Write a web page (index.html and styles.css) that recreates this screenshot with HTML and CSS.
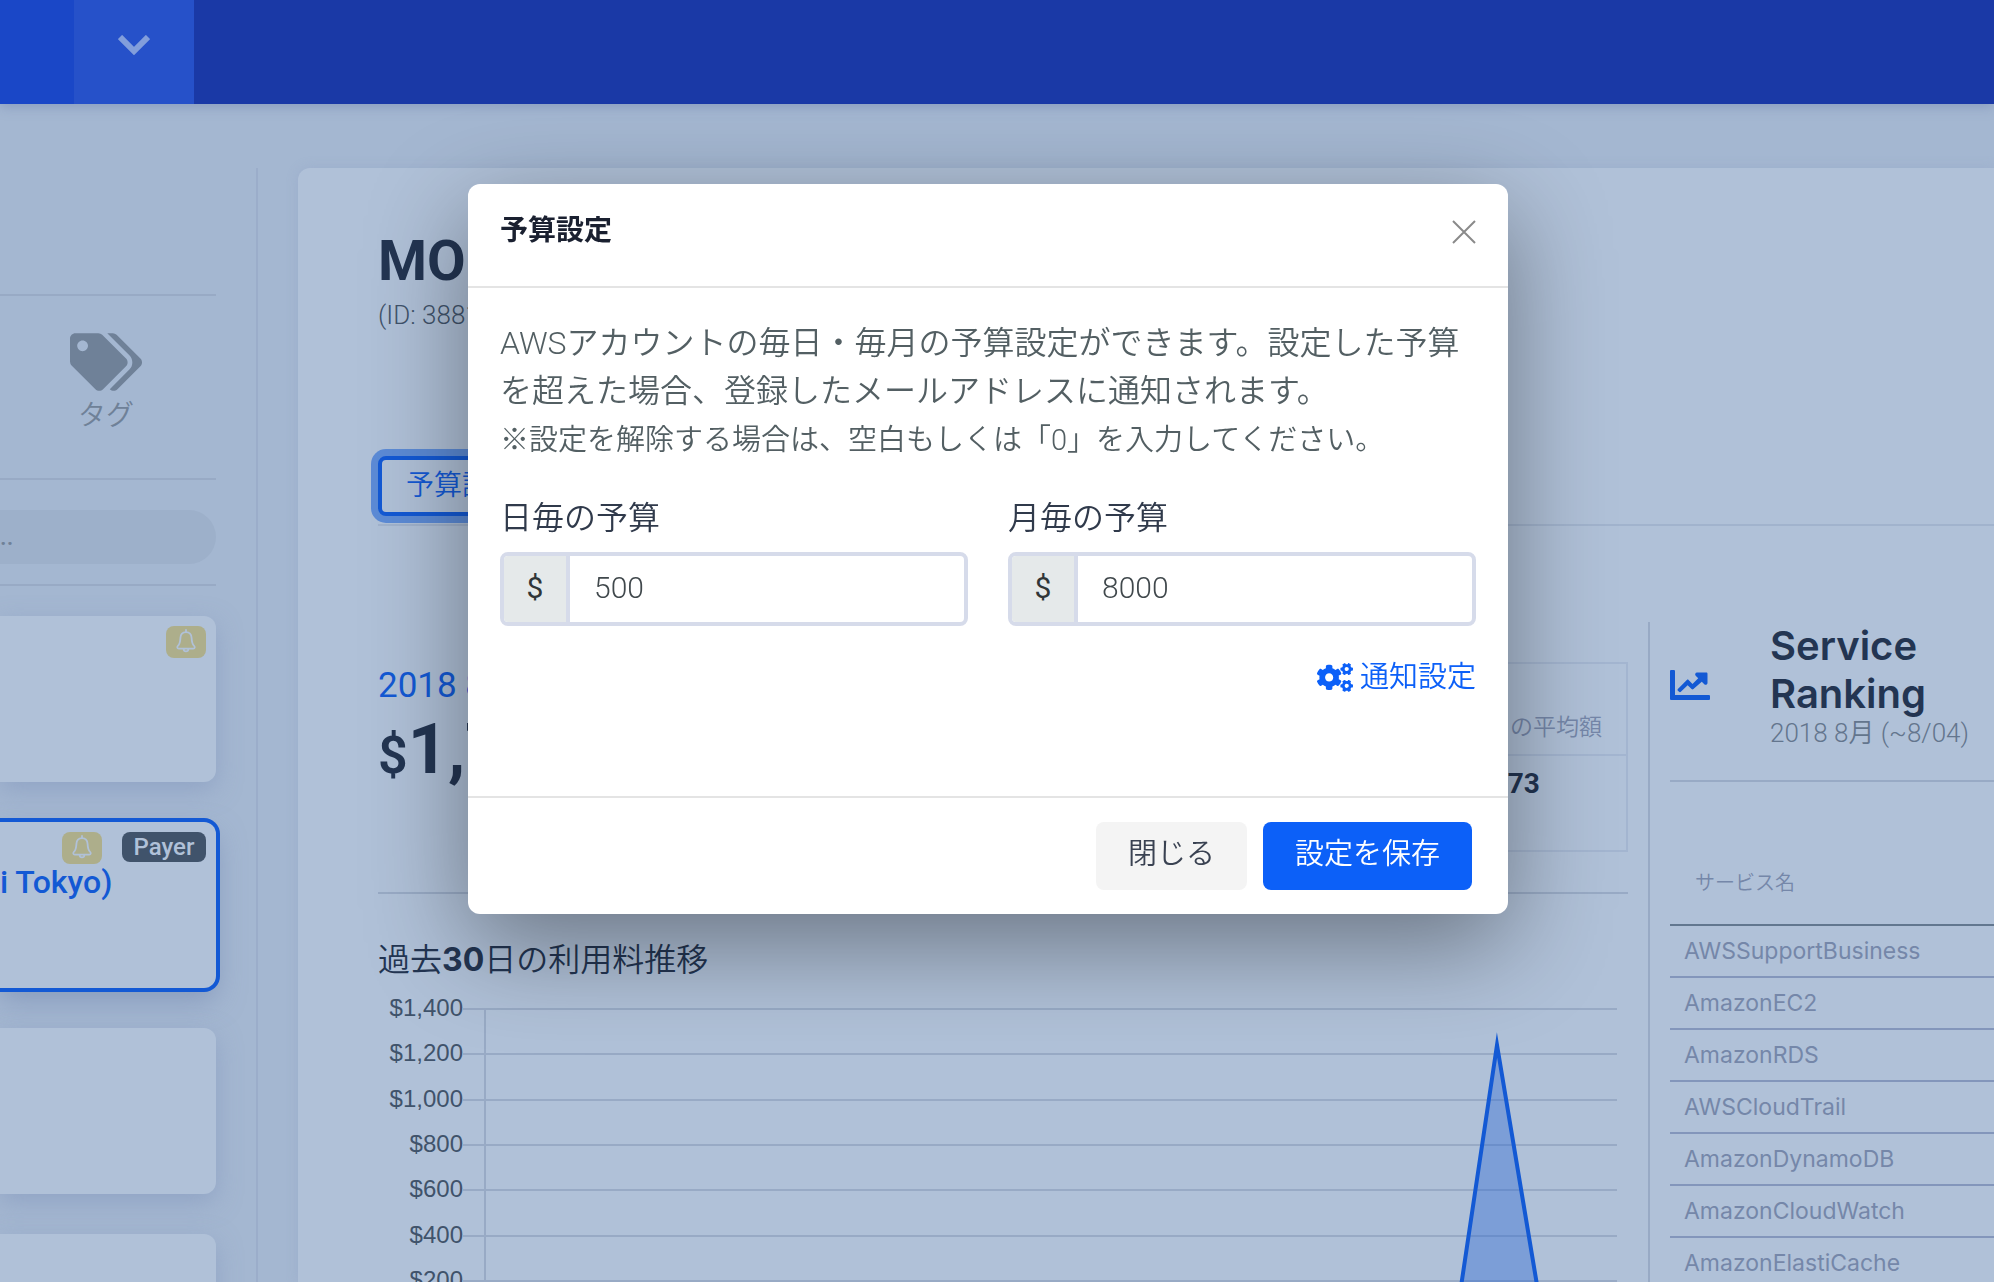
FILE: index.html
```html
<!DOCTYPE html>
<html lang="ja">
<head>
<meta charset="utf-8">
<meta name="viewport" content="width=device-width, initial-scale=1">
<title>予算設定</title>
<link rel="stylesheet" href="styles.css">
</head>
<body>
<svg class="sprite" aria-hidden="true">
  <symbol id="bell" viewBox="0 0 20 24">
    <path d="M10 3.2C6.6 3.2 4.6 5.6 4.4 9c-.2 4-.7 6.200-2.300 7.600-1.400 1.300-1 3 .7 3h14.400c1.700 0 2.100-1.700.7-3C16.300 15.200 15.800 13 15.600 9 15.400 5.600 13.400 3.200 10 3.200zM10 3V1M7.600 20c.2 3.200 4.600 3.200 4.800 0" fill="none" stroke="currentColor" stroke-width="1.800" stroke-linecap="round"/>
  </symbol>
</svg>

<header class="topbar">
  <div class="brand"></div>
  <button class="toggle" type="button" aria-label="メニュー">
    <svg width="32" height="20" viewBox="0 0 32 20"><path d="M2 2l14 14L30 2" fill="none" stroke="currentColor" stroke-width="6"/></svg>
  </button>
</header>

<div class="page">
  <aside class="sidebar">
    <div class="side-tabs">
      <a class="tag" href="#">
        <svg width="72" height="58" viewBox="0 0 640 512"><path fill="currentColor" d="M497.941 225.941L286.059 14.059A48 48 0 0 0 252.118 0H48C21.490 0 0 21.490 0 48v204.118a48 48 0 0 0 14.059 33.941l211.882 211.882c18.744 18.745 49.136 18.746 67.882 0l204.118-204.118c18.745-18.745 18.745-49.137 0-67.882zM112 160c-26.510 0-48-21.490-48-48s21.490-48 48-48 48 21.490 48 48-21.490 48-48 48zm513.941 133.823L421.823 497.941c-18.745 18.745-49.137 18.745-67.882 0l-.36-.36L527.640 323.522c16.999-16.999 26.360-39.600 26.360-63.640s-9.362-46.641-26.360-63.640L331.397 0h48.721a48 48 0 0 1 33.941 14.059l211.882 211.882c18.745 18.745 18.745 49.137 0 67.882z"/></svg>
        <span>タグ</span>
      </a>
    </div>
    <div class="search"><input type="text" placeholder=".." aria-label="検索"></div>
    <div class="accounts">
      <div class="account">
        <div class="badges"><span class="badge alert"><svg width="20" height="24"><use href="#bell"/></svg></span></div>
      </div>
      <div class="account selected">
        <div class="badges"><span class="badge alert"><svg width="20" height="24"><use href="#bell"/></svg></span><span class="badge payer">Payer</span></div>
        <div class="account-name">i Tokyo)</div>
      </div>
      <div class="account"></div>
      <div class="account"></div>
    </div>
  </aside>

  <main class="panel">
    <h1>MOBI</h1>
    <p class="account-id">(ID: 3881)</p>
    <div class="toolbar"><button class="outline" type="button">予算設定</button></div>
    <div class="columns">
      <section class="usage">
        <div class="summary">
          <div>
            <div class="month">2018 8月</div>
            <div class="amount"><small>$</small>1,739</div>
          </div>
          <table class="average">
            <tr><th>過去3ヶ月の平均額</th></tr>
            <tr><td>$9.73</td></tr>
          </table>
        </div>
        <h2>過去<b>30</b>日の利用料推移</h2>
        <svg class="chart" viewBox="0 0 1250 360" role="img" aria-label="過去30日の利用料推移">
          <g class="grid">
            <path d="M85 25H1239M85 70H1239M85 116H1239M85 161H1239M85 206H1239M85 252H1239M85 297H1239M85 343H1239M107 24V343"/>
          </g>
          <g class="ticks">
            <text x="85" y="32">$1,400</text>
            <text x="85" y="77">$1,200</text>
            <text x="85" y="123">$1,000</text>
            <text x="85" y="168">$800</text>
            <text x="85" y="213">$600</text>
            <text x="85" y="259">$400</text>
            <text x="85" y="304">$200</text>
          </g>
          <path class="area" d="M107 343H1077L1119 61L1166 343H1239"/>
        </svg>
      </section>
      <aside class="ranking">
        <div class="ranking-head">
          <svg width="40" height="30" viewBox="0 64 512 384"><path fill="currentColor" d="M496 384H64V80c0-8.840-7.160-16-16-16H16C7.160 64 0 71.160 0 80v352c0 9 7 16 16 16h480c8.840 0 16-7.160 16-16v-32c0-8.840-7.160-16-16-16zM464 96H345.940c-21.380 0-32.090 25.850-16.970 40.970l32.400 32.400L288 242.750l-50-50c-8-8-16-8-23 0L100.690 306c-6.250 6.250-6.250 16 0 22l15 15c7 7 17 7 23 0L226 258l50 50c8 8 16 8 24 0l106.600-93.400 32.400 32.400c15.120 15.120 40.970 4.410 40.970-16.970V112c.01-8.840-7.150-16-15.990-16z"/></svg>
          <div>
            <h3>Service Ranking</h3>
            <p>2018 8月 (~8/04)</p>
          </div>
        </div>
        <table class="services">
          <thead><tr><th>サービス名</th></tr></thead>
          <tbody>
            <tr><td>AWSSupportBusiness</td></tr>
            <tr><td>AmazonEC2</td></tr>
            <tr><td>AmazonRDS</td></tr>
            <tr><td>AWSCloudTrail</td></tr>
            <tr><td>AmazonDynamoDB</td></tr>
            <tr><td>AmazonCloudWatch</td></tr>
            <tr><td>AmazonElastiCache</td></tr>
          </tbody>
        </table>
      </aside>
    </div>
  </main>
</div>

<div class="overlay">
  <form class="modal" role="dialog" aria-labelledby="modal-title">
    <div class="modal-head">
      <h4 id="modal-title">予算設定</h4>
      <button class="close" type="button" aria-label="閉じる">
        <svg width="24" height="24" viewBox="0 0 24 24"><path d="M1 1l22 22M23 1L1 23" stroke="currentColor" stroke-width="2"/></svg>
      </button>
    </div>
    <div class="modal-body">
      <p class="lead">AWSアカウントの毎日・毎月の予算設定ができます。設定した予算を超えた場合、登録したメールアドレスに通知されます。</p>
      <p class="note">※設定を解除する場合は、空白もしくは「0」を入力してください。</p>
      <div class="fields">
        <div class="field">
          <label for="daily">日毎の予算</label>
          <div class="group"><span>$</span><input id="daily" type="text" value="500"></div>
        </div>
        <div class="field">
          <label for="monthly">月毎の予算</label>
          <div class="group"><span>$</span><input id="monthly" type="text" value="8000"></div>
        </div>
      </div>
      <a class="notify" href="#">
        <svg width="36" height="29" viewBox="0 0 640 512"><path fill="currentColor" d="M512.100 191l-8.200 14.300c-3 5.300-9.400 7.500-15.100 5.400-11.800-4.400-22.600-10.700-32.100-18.600-4.600-3.800-5.800-10.500-2.800-15.700l8.200-14.300c-6.900-8-12.300-17.300-15.900-27.400h-16.500c-6 0-11.200-4.300-12.200-10.300-2-12-2.100-24.600 0-37.100 1-6 6.200-10.400 12.200-10.400h16.500c3.600-10.100 9-19.400 15.900-27.400l-8.200-14.300c-3-5.200-1.900-11.900 2.800-15.700 9.500-7.900 20.400-14.200 32.100-18.600 5.700-2.100 12.100.1 15.100 5.400l8.200 14.300c10.500-1.900 21.200-1.900 31.700 0L552 6.300c3-5.300 9.400-7.500 15.100-5.400 11.800 4.400 22.600 10.700 32.100 18.600 4.600 3.800 5.800 10.500 2.800 15.700l-8.200 14.300c6.900 8 12.300 17.300 15.900 27.400h16.500c6 0 11.200 4.300 12.200 10.300 2 12 2.100 24.600 0 37.100-1 6-6.200 10.400-12.200 10.400h-16.500c-3.600 10.100-9 19.400-15.900 27.400l8.200 14.300c3 5.200 1.900 11.900-2.800 15.700-9.500 7.900-20.400 14.200-32.100 18.600-5.700 2.100-12.100-.1-15.100-5.400l-8.200-14.300c-10.400 1.900-21.200 1.900-31.700 0zm-10.500-58.800c38.500 29.600 82.400-14.300 52.800-52.800-38.500-29.700-82.400 14.300-52.800 52.800zM386.300 286.100l33.700 16.800c10.100 5.800 14.500 18.100 10.500 29.100-8.900 24.200-26.400 46.400-42.600 65.800-7.400 8.900-20.200 11.100-30.300 5.300l-29.100-16.800c-16 13.700-34.600 24.600-54.900 31.700v33.600c0 11.600-8.300 21.600-19.700 23.600-24.600 4.200-50.400 4.400-75.900 0-11.500-2-20-11.900-20-23.600V418c-20.300-7.200-38.900-18-54.900-31.700L74 403c-10 5.800-22.900 3.600-30.300-5.300-16.200-19.400-33.300-41.600-42.200-65.700-4-10.900.4-23.200 10.500-29.100l33.300-16.800c-3.900-20.900-3.900-42.400 0-63.400L12 205.800c-10.100-5.800-14.600-18.100-10.500-29 8.900-24.200 26-46.400 42.200-65.800 7.400-8.900 20.200-11.100 30.300-5.300l29.100 16.800c16-13.700 34.600-24.600 54.900-31.700V57.100c0-11.500 8.200-21.500 19.600-23.500 24.600-4.200 50.500-4.400 76-.1 11.500 2 20 11.900 20 23.600v33.600c20.300 7.200 38.900 18 54.900 31.700l29.100-16.800c10-5.800 22.900-3.600 30.300 5.300 16.200 19.400 33.200 41.600 42.100 65.800 4 10.900.1 23.200-10 29.100l-33.700 16.800c3.900 21 3.900 42.500 0 63.500zm-117.600 21.100c59.200-77-28.700-164.900-105.700-105.700-59.200 77 28.700 164.900 105.700 105.700zm243.400 182.700l-8.200 14.300c-3 5.300-9.400 7.500-15.100 5.400-11.800-4.400-22.600-10.700-32.100-18.600-4.600-3.800-5.800-10.500-2.800-15.700l8.200-14.300c-6.900-8-12.300-17.300-15.900-27.400h-16.500c-6 0-11.200-4.300-12.200-10.300-2-12-2.100-24.600 0-37.100 1-6 6.200-10.400 12.200-10.400h16.500c3.600-10.100 9-19.400 15.900-27.400l-8.200-14.300c-3-5.200-1.900-11.900 2.800-15.700 9.500-7.900 20.400-14.200 32.100-18.600 5.700-2.100 12.100.1 15.100 5.400l8.200 14.300c10.500-1.900 21.200-1.900 31.700 0l8.200-14.300c3-5.300 9.400-7.500 15.100-5.400 11.800 4.400 22.600 10.700 32.100 18.600 4.600 3.800 5.800 10.500 2.800 15.700l-8.200 14.300c6.900 8 12.300 17.300 15.900 27.400h16.500c6 0 11.200 4.300 12.200 10.300 2 12 2.100 24.600 0 37.100-1 6-6.200 10.400-12.200 10.400h-16.500c-3.600 10.100-9 19.400-15.900 27.400l8.200 14.300c3 5.200 1.900 11.900-2.800 15.700-9.500 7.900-20.400 14.200-32.100 18.600-5.700 2.100-12.100-.1-15.100-5.400l-8.200-14.300c-10.400 1.900-21.200 1.900-31.700 0zM501.600 431c38.500 29.600 82.400-14.300 52.800-52.800-38.500-29.600-82.400 14.300-52.800 52.800z"/></svg>
        <span>通知設定</span>
      </a>
    </div>
    <div class="modal-foot">
      <button class="btn" type="button">閉じる</button>
      <button class="btn primary" type="submit">設定を保存</button>
    </div>
  </form>
</div>
</body>
</html>
```
FILE: styles.css
```css
* { box-sizing: border-box; }

:root {
  --bg: #a4b7d1;
  --surface: #b0c1d8;
  --rule: #98aac5;
  --ink: #233552;
  --muted: #7587a9;
  --blue: #1359d4;
  --bright: #0c60f8;
  --sans: Roboto, "Noto Sans CJK JP", sans-serif;
  --wide: Inter, "Noto Sans CJK JP", sans-serif;
}

body {
  margin: 0;
  height: 100vh;
  overflow: hidden;
  display: flex;
  flex-direction: column;
  background: var(--bg);
  color: var(--ink);
  font-family: var(--sans);
  font-weight: 350;
}

h1, h2, h3, h4, p { margin: 0; }
button, input { font: inherit; color: inherit; }
button { cursor: pointer; }
a { text-decoration: none; }
svg { display: block; }
.sprite { display: none; }

/* top bar */
.topbar {
  flex: none;
  display: flex;
  height: 104px;
  background: #1a39a6;
  box-shadow: 0 2px 12px rgba(90, 110, 160, .4);
}
.brand { width: 74px; background: #1a47c7; }
.toggle {
  width: 120px;
  padding: 0 0 14px;
  border: 0;
  display: grid;
  place-items: center;
  background: #2651c9;
  color: #829edb;
}

.page { display: flex; flex: 1; gap: 40px; padding-top: 64px; min-height: 0; }

/* sidebar */
.sidebar { flex: none; width: 258px; padding-right: 40px; border-right: 2px solid #9badca; }
.side-tabs {
  margin-top: 126px;
  height: 186px;
  border: solid var(--rule);
  border-width: 2px 0;
  padding: 37px 4px 0 0;
}
.tag { display: flex; flex-direction: column; align-items: center; gap: 9px; color: #6f8198; font-size: 28px; line-height: 32px; }
.search { padding: 30px 0 20px; border-bottom: 2px solid var(--rule); }
.search input {
  display: block;
  width: 100%;
  height: 54px;
  padding: 0;
  border: 0;
  border-radius: 0 27px 27px 0;
  background: #9db0ca;
  font-size: 24px;
  font-weight: 500;
}
.search input::placeholder { color: #6f8198; opacity: 1; }
.accounts { display: flex; flex-direction: column; gap: 40px; padding-top: 30px; }
.account {
  height: 166px;
  padding: 10px;
  border-radius: 0 12px 12px 0;
  background: var(--surface);
  box-shadow: 0 8px 24px rgba(125, 145, 185, .5);
}
.account.selected { box-shadow: 0 0 0 4px var(--blue), 0 12px 28px rgba(115, 135, 175, .6); padding-left: 0; }
.badges { display: flex; justify-content: flex-end; align-items: flex-start; gap: 20px; height: 32px; }
.badge { display: grid; place-items: center; border-radius: 8px; color: var(--surface); }
.badge.alert { width: 40px; height: 32px; padding-bottom: 2px; background: #adae8b; }
.badge.payer { width: 84px; height: 30px; background: #40536b; font: 500 24px/28px var(--sans); }
.account-name { color: var(--blue); font: 500 32px/36px var(--sans); }

/* main panel */
.panel {
  flex: 1;
  min-width: 0;
  padding: 60px 0 0 80px;
  border-radius: 12px 0 0 0;
  background: var(--surface);
  box-shadow: 0 0 12px rgba(140, 155, 195, .3);
}
h1 { font-size: 56px; line-height: 66px; font-weight: 700; }
.account-id { font-size: 26px; line-height: 42px; color: #40536b; }
.toolbar { margin-top: 120px; padding-bottom: 8px; border-bottom: 2px solid #a1b3cd; }
.outline {
  display: block;
  height: 60px;
  padding: 0 24px 6px;
  border: 4px solid var(--blue);
  border-radius: 8px;
  background: var(--surface);
  color: var(--blue);
  font-size: 28px;
  box-shadow: 0 0 0 7px #5c8bd6;
}
.columns { display: flex; gap: 20px; margin-top: 96px; }
.usage { flex: 1; min-width: 0; }
.summary {
  display: flex;
  justify-content: space-between;
  padding: 40px 0;
  border-bottom: 2px solid var(--rule);
}
.month { font-size: 35px; line-height: 48px; font-weight: 400; color: var(--blue); }
.amount { font-size: 70px; line-height: 78px; font-weight: 700; }
.amount small { font-size: 52px; font-weight: 600; }
.average { height: 190px; border-collapse: collapse; }
.average th, .average td { border: 2px solid #a3b5d0; padding: 12px 24px; line-height: 32px; text-align: center; }
.average th { vertical-align: bottom; padding-bottom: 10px; font-size: 23px; font-weight: 350; color: var(--muted); }
.average td { vertical-align: top; font-size: 28px; font-weight: 700; }
h2 { margin-top: 42px; font-size: 32px; line-height: 48px; font-weight: 350; }
h2 b { font: 700 32px/48px var(--wide); }
.chart { width: 100%; height: auto; }
.grid { fill: none; stroke: var(--rule); stroke-width: 2; }
.ticks { font: 24px "Liberation Sans", sans-serif; fill: #40536b; text-anchor: end; }
.area { fill: rgba(19, 89, 212, .33); stroke: var(--blue); stroke-width: 4; stroke-miterlimit: 10; }

/* service ranking */
.ranking { flex: none; width: 346px; padding-left: 20px; border-left: 2px solid var(--rule); }
.ranking-head {
  display: grid;
  grid-template-columns: 100px 1fr;
  align-items: center;
  padding-bottom: 32px;
  border-bottom: 2px solid var(--rule);
}
.ranking-head svg { color: var(--blue); }
.ranking-head h3 { width: min-content; font: 600 40px/48px var(--wide); }
.ranking-head p { font-size: 26px; line-height: 30px; color: #63758d; white-space: nowrap; }
.services { width: 100%; border-spacing: 0; text-align: left; color: var(--muted); }
.services th {
  height: 144px;
  padding: 0 25px 26px;
  vertical-align: bottom;
  border-bottom: 2px solid #62778f;
  font-size: 20px;
  line-height: 30px;
  font-weight: 350;
}
.services td { height: 52px; padding: 0 14px; border-bottom: 2px solid #8396bb; font: 400 23px/30px var(--wide); }

/* modal */
.overlay {
  position: fixed;
  inset: 0;
  display: flex;
  justify-content: center;
  align-items: flex-start;
  padding: 184px 18px 0 0;
}
.modal {
  width: 1040px;
  border-radius: 12px;
  background: #fff;
  box-shadow: 0 30px 100px rgba(0, 0, 0, .4);
}
.modal-head {
  display: flex;
  justify-content: space-between;
  align-items: flex-start;
  padding: 26px 32px 34px;
  border-bottom: 2px solid #e4e4e4;
}
.modal-head h4 { font-size: 28px; line-height: 42px; font-weight: 700; color: #1a2030; }
.close { margin-top: 10px; padding: 0; border: 0; background: none; color: #8a8a8a; }
.modal-body { padding: 31px 32px; height: 508px; }
.lead { font-size: 32px; line-height: 48px; color: #535f63; }
.note { font-size: 29px; line-height: 50px; color: #535f63; }
.fields { display: grid; grid-template-columns: 1fr 1fr; gap: 40px; margin-top: 29px; }
.field { min-width: 0; }
.field label { display: block; font-size: 32px; line-height: 48px; color: #303a4b; }
.group {
  display: flex;
  height: 74px;
  margin-top: 10px;
  border: 4px solid #d6dbea;
  border-radius: 8px;
  overflow: hidden;
}
.group span {
  flex: none;
  width: 66px;
  display: grid;
  place-items: center;
  padding-bottom: 4px;
  border-right: 4px solid #d6dbea;
  background: #e5e9ea;
  color: #303538;
  font-size: 30px;
  font-weight: 400;
}
.group input {
  flex: 1;
  min-width: 0;
  padding: 0 24px 4px;
  border: 0;
  outline: 0;
  background: none;
  color: #40484c;
  font-size: 30px;
}
.notify {
  display: flex;
  justify-content: flex-end;
  align-items: center;
  gap: 7px;
  margin-top: 30px;
  color: var(--bright);
  font-size: 29px;
  line-height: 42px;
}
.modal-foot {
  display: flex;
  justify-content: flex-end;
  gap: 16px;
  padding: 24px 36px;
  border-top: 2px solid #e4e4e4;
}
.btn {
  height: 68px;
  padding: 0 32px 10px;
  border: 0;
  border-radius: 8px;
  background: #f4f4f4;
  color: #3a4252;
  font-size: 29px;
}
.btn.primary { background: var(--bright); color: #fff; }
```
